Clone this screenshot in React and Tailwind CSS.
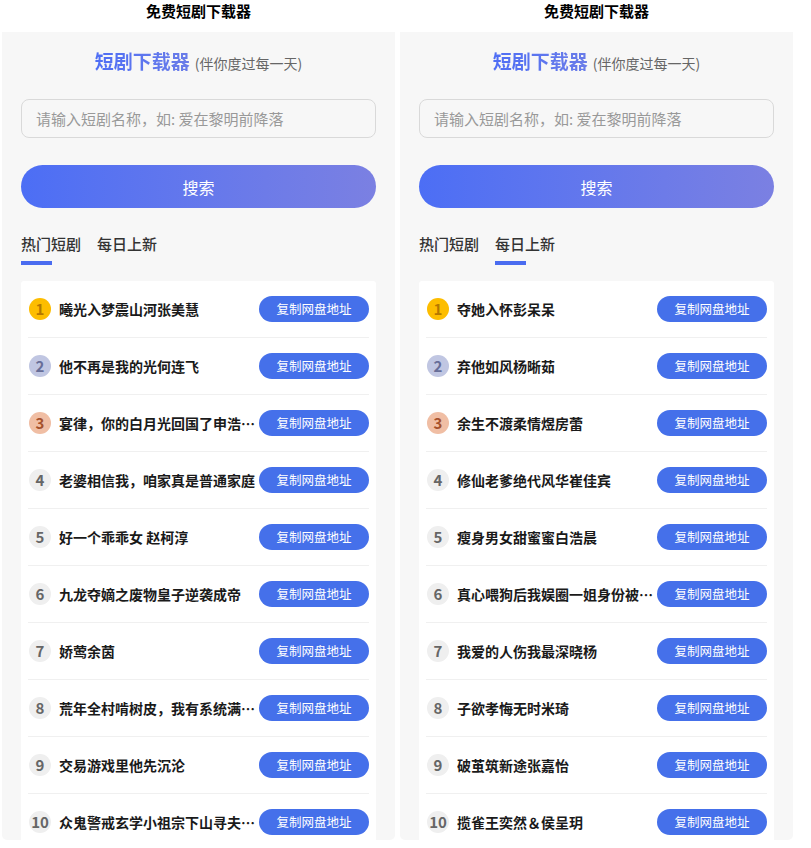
import React from "react";

const hot = [
  "曦光入梦震山河张美慧",
  "他不再是我的光何连飞",
  "宴律，你的白月光回国了申浩然林悦",
  "老婆相信我，咱家真是普通家庭",
  "好一个乖乖女 赵柯淳",
  "九龙夺嫡之废物皇子逆袭成帝",
  "娇莺余茵",
  "荒年全村啃树皮，我有系统满仓粮",
  "交易游戏里他先沉沦",
  "众鬼警戒玄学小祖宗下山寻夫君了",
];

const daily = [
  "夺她入怀彭呆呆",
  "弃他如风杨晰茹",
  "余生不渡柔情煜房蕾",
  "修仙老爹绝代风华崔佳宾",
  "瘦身男女甜蜜蜜白浩晨",
  "真心喂狗后我娱圈一姐身份被曝光",
  "我爱的人伤我最深晓杨",
  "子欲孝悔无时米琦",
  "破茧筑新途张嘉怡",
  "揽雀王奕然＆侯呈玥",
];

const badgeClass = (n) => {
  if (n === 1) return "bg-[#fdbd00] text-[#b57800]";
  if (n === 2) return "bg-[#c0c6e2] text-[#676d98]";
  if (n === 3) return "bg-[#f0bea4] text-[#a5502b]";
  return "bg-[#efefef] text-[#666666]";
};

const Panel = ({ items, active }) => {
  const tabs = ["热门短剧", "每日上新"];
  return (
    <div className="w-[393px] shrink-0 flex flex-col">
      <h1 className="h-[22px] mb-[10px] text-center text-[15px] leading-[22px] font-bold text-black">
        免费短剧下载器
      </h1>
      <div className="h-[808px] overflow-hidden bg-[#f7f7f7] rounded-b-[5px] px-[19px] pt-[15px]">
        <div className="flex items-baseline justify-center h-[28px]">
          <span className="text-[19px] leading-[28px] font-bold bg-gradient-to-r from-[#4f6ef5] to-[#6a7ce8] bg-clip-text text-transparent">
            短剧下载器
          </span>
          <span className="ml-[5px] text-[14px] text-[#666666]">(伴你度过每一天)</span>
        </div>

        <input
          className="mt-[24px] w-full h-[39px] rounded-[8px] border border-[#d9d9d9] bg-transparent px-[14px] text-[15px] text-[#333] placeholder:text-[#999999] outline-none"
          placeholder="请输入短剧名称，如: 爱在黎明前降落"
        />

        <button className="mt-[27px] w-full h-[43px] rounded-full bg-gradient-to-r from-[#4c6ef5] to-[#7b80e2] text-white text-[16px]">
          搜索
        </button>

        <div className="mt-[25px] flex gap-[16px]">
          {tabs.map((t, i) => (
            <div key={t} className="flex flex-col">
              <span className="text-[15px] leading-[22px] font-medium text-[#333333]">{t}</span>
              <span
                className={
                  i === active
                    ? "mt-[6px] w-[31px] h-[4px] bg-[#4a6cf0]"
                    : "mt-[6px] w-[31px] h-[4px] bg-transparent"
                }
              />
            </div>
          ))}
        </div>

        <div className="mt-[16px] bg-white rounded-[3px]">
          {items.map((name, i) => (
            <div
              key={name}
              className="mx-[7px] h-[57px] flex items-center border-b border-[#f0f0f0]"
            >
              <span
                className={`ml-[1px] mr-[8px] w-[22px] h-[22px] shrink-0 rounded-full flex items-center justify-center text-[15px] font-bold ${badgeClass(i + 1)}`}
              >
                {i + 1}
              </span>
              <span className="flex-1 min-w-0 truncate text-[14px] font-semibold text-[#1a1a1a]">
                {name}
              </span>
              <button className="shrink-0 w-[110px] h-[26px] rounded-full bg-[#4570ea] text-white text-[12.5px]">
                复制网盘地址
              </button>
            </div>
          ))}
        </div>
      </div>
    </div>
  );
};

export default function App() {
  return (
    <div
      className="w-[811px] h-[848px] overflow-hidden bg-white flex gap-[5px] pl-[2px]"
      style={{ fontFamily: '"Noto Sans CJK SC", "Noto Sans", sans-serif' }}
    >
      <Panel items={hot} active={0} />
      <Panel items={daily} active={1} />
    </div>
  );
}
